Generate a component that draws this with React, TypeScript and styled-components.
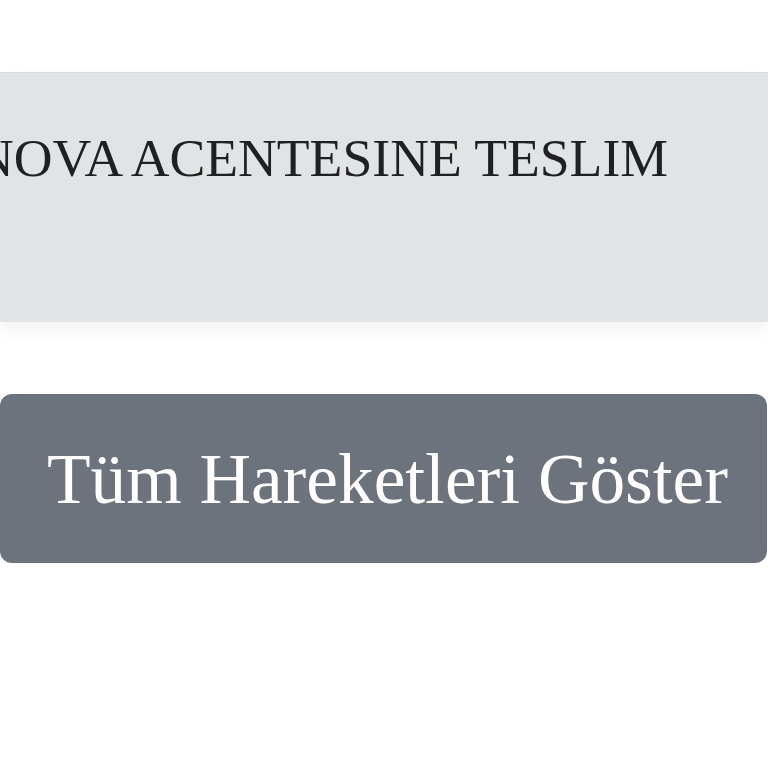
import styled, { createGlobalStyle } from "styled-components";

const GlobalStyle = createGlobalStyle`
  html, body {
    margin: 0;
    padding: 0;
    background: #ffffff;
    overflow: hidden;
  }
  body {
    font-family: "Liberation Serif", "Times New Roman", serif;
  }
`;

const Page = styled.main`
  display: flex;
  flex-direction: column;
  gap: 72px;
  padding-top: 72px;
  width: 768px;
`;

const StatusPanel = styled.section`
  height: 250px;
  box-sizing: border-box;
  padding-top: 55px;
  background-color: #e2e3e5;
  border-top: 1px solid #d8d9db;
  box-shadow: 0 8px 16px rgba(0, 0, 0, 0.05);
  overflow: hidden;
`;

// the line is wider than the view, its start is clipped on the left
const StatusText = styled.p`
  margin: 0 0 0 -25px;
  font-size: 53.7px;
  line-height: 60px;
  color: #1f2021;
  white-space: nowrap;
`;

const ActionButton = styled.button`
  display: flex;
  align-items: center;
  justify-content: center;
  width: 767px;
  height: 169px;
  padding: 0 0 0 8px;
  border: none;
  border-radius: 12px;
  background-color: #6c737d;
  color: #ffffff;
  font-family: "Liberation Serif", "Times New Roman", serif;
  font-size: 71.3px;
  cursor: pointer;
`;

const App = () => {
  return (
    <>
      <GlobalStyle />
      <Page>
        <StatusPanel>
          <StatusText>NOVA ACENTESINE TESLIM</StatusText>
        </StatusPanel>
        <ActionButton>Tüm Hareketleri Göster</ActionButton>
      </Page>
    </>
  );
};

export default App;
